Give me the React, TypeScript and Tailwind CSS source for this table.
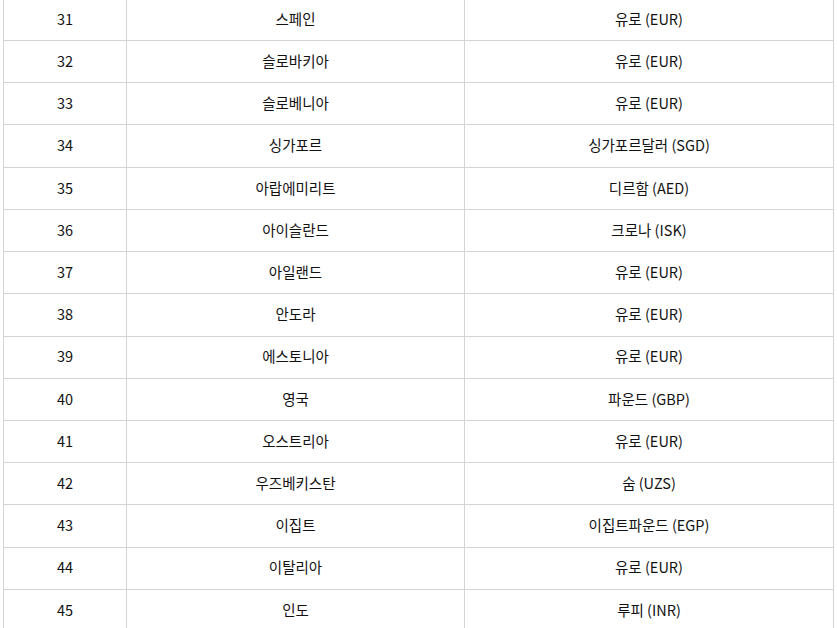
const rows: [number, string, string][] = [
  [31, "스페인", "유로 (EUR)"],
  [32, "슬로바키아", "유로 (EUR)"],
  [33, "슬로베니아", "유로 (EUR)"],
  [34, "싱가포르", "싱가포르달러 (SGD)"],
  [35, "아랍에미리트", "디르함 (AED)"],
  [36, "아이슬란드", "크로나 (ISK)"],
  [37, "아일랜드", "유로 (EUR)"],
  [38, "안도라", "유로 (EUR)"],
  [39, "에스토니아", "유로 (EUR)"],
  [40, "영국", "파운드 (GBP)"],
  [41, "오스트리아", "유로 (EUR)"],
  [42, "우즈베키스탄", "숨 (UZS)"],
  [43, "이집트", "이집트파운드 (EGP)"],
  [44, "이탈리아", "유로 (EUR)"],
  [45, "인도", "루피 (INR)"],
];

export default function App() {
  return (
    <div className="w-[837px] h-[628px] overflow-hidden bg-white">
      <table
        className="ml-[3px] -mt-[2.23px] w-[831px] border-collapse table-fixed text-[14.5px] text-[#111]"
        style={{ fontFamily: '"Noto Sans CJK KR", "Noto Sans", sans-serif' }}
      >
        <colgroup>
          <col className="w-[123px]" />
          <col className="w-[338px]" />
          <col />
        </colgroup>
        <tbody>
          {rows.map(([no, country, currency]) => (
            <tr key={no} className="h-[42.23px]">
              <td className="border border-[#d4d4d4] text-center p-0 pb-[1px] leading-none">{no}</td>
              <td className="border border-[#d4d4d4] text-center p-0 pb-[1px] leading-none">{country}</td>
              <td className="border border-[#d4d4d4] text-center p-0 pb-[1px] leading-none">{currency}</td>
            </tr>
          ))}
        </tbody>
      </table>
    </div>
  );
}
